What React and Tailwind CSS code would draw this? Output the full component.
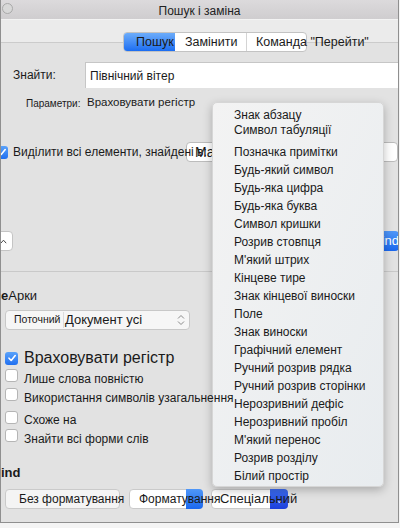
import React from "react";

const menuItems = [
  "Позначка примітки",
  "Будь-який символ",
  "Будь-яка цифра",
  "Будь-яка буква",
  "Символ кришки",
  "Розрив стовпця",
  "М'який штрих",
  "Кінцеве тире",
  "Знак кінцевої виноски",
  "Поле",
  "Знак виноски",
  "Графічний елемент",
  "Ручний розрив рядка",
  "Ручний розрив сторінки",
  "Нерозривний дефіс",
  "Нерозривний пробіл",
  "М'який перенос",
  "Розрив розділу",
  "Білий простір",
];

function Check({ checked }) {
  if (checked) {
    return (
      <div className="w-[13px] h-[13px] rounded-[3px] bg-gradient-to-b from-[#5aa2fa] to-[#1f6ff0] flex items-center justify-center shrink-0">
        <svg width="10" height="10" viewBox="0 0 10 10">
          <path d="M2 5.2 L4.2 7.5 L8.2 2.5" stroke="white" strokeWidth="1.6" fill="none" strokeLinecap="round" strokeLinejoin="round" />
        </svg>
      </div>
    );
  }
  return <div className="w-[13px] h-[13px] rounded-[3px] bg-white border border-[#b5b5b5] shrink-0" />;
}

export default function App() {
  return (
    <div className="w-[400px] h-[528px] bg-[#f4f4f4] overflow-hidden" style={{ fontFamily: '"Liberation Sans", Arial, sans-serif' }}>
      <div className="relative w-[399px] h-[523px] bg-[#e2e2e2] border-l border-r border-b border-[#8f8f8f] overflow-hidden text-[#1a1a1a]">
        {/* title bar */}
        <div className="h-[19px] bg-gradient-to-b from-[#dcdadc] to-[#cfcdcf] flex items-end relative">
          <div className="absolute left-[1px] top-[3px] w-[11px] h-[11px] rounded-full border border-[#a9a9a9] bg-[#d8d8d8]" />
          <div className="w-full text-center text-[12px] leading-[14px] pb-[1px] text-[#222]">Пошук і заміна</div>
        </div>
        {/* toolbar */}
        <div className="h-[24px] bg-[#ebebeb] border-t border-[#f3f3f3] border-b border-b-[#cbcbcb]" />
        {/* tabs */}
        <div className="mt-[-11px] ml-[122px] h-[20px] flex relative z-10">
          <div className="flex h-[20px] rounded-[4px] border border-[#c3c3c3] bg-white text-[12.5px] leading-[18px]">
            <div className="w-[51px] h-full rounded-l-[3px] bg-gradient-to-b from-[#6cacfa] to-[#1b6df1] pl-[12px] overflow-hidden whitespace-nowrap text-[#1a1a1a]">Пошук</div>
            <div className="w-[72px] h-full border-r border-[#d4d4d4] pl-[10px] whitespace-nowrap">Замінити</div>
            <div className="w-[59px] h-full pl-[9px] whitespace-nowrap overflow-visible">Команда "Перейти"</div>
          </div>
        </div>
        {/* find row */}
        <div className="mt-[10px] h-[26px] flex items-center">
          <div className="w-[84px] pl-[12px] text-[12px]">Знайти:</div>
          <div className="flex-1 h-[26px] bg-white border-t border-l border-[#c6c6c6] pl-[4px] flex items-center text-[12px]">Північний вітер</div>
        </div>
        {/* params */}
        <div className="mt-[8px] h-[14px] flex items-center">
          <div className="w-[86px] pl-[25px] text-[10px] whitespace-nowrap">Параметри:</div>
          <div className="text-[11.5px] whitespace-nowrap">Враховувати регістр</div>
        </div>
        {/* highlight row */}
        <div className="mt-[32px] h-[20px] flex items-center">
          <div className="ml-[-6px] mr-[5px]"><Check checked /></div>
          <div className="w-[173px] text-[12px] whitespace-nowrap relative z-10">Виділити всі елементи, знайдені в:</div>
          <div className="flex-1 h-[20px] bg-white border border-[#bcbcbc] rounded-[4px] pl-[8px] text-[14px] leading-[18px]">Ma</div>
        </div>
        {/* buttons row */}
        <div className="mt-[69px] h-[20px] flex items-center justify-between">
          <div className="ml-[-20px] w-[32px] h-[20px] bg-white border border-[#c4c4c4] rounded-[4px] flex items-center justify-end pr-[5px] text-[11px] text-[#555]">
            <svg width="7" height="5" viewBox="0 0 7 5"><path d="M0.8 4.2 L3.5 1.2 L6.2 4.2" stroke="#444" strokeWidth="1" fill="none" /></svg>
          </div>
          <div className="w-[60px] h-[20px] rounded-[4px] bg-gradient-to-b from-[#4f97f8] to-[#1a67ee] text-white text-[13px] leading-[20px] text-right mr-[-1px]">Find</div>
        </div>
        {/* separator */}
        <div className="mt-[20px] h-[1px] bg-[#c9c9c9]" />
        {/* section label */}
        <div className="mt-[16px] h-[16px] flex items-center text-[13px]">
          <span className="font-bold">е</span><span>Арки</span>
        </div>
        {/* select */}
        <div className="mt-[6px] ml-[4px] w-[185px] h-[20px] bg-[#f6f6f6] border border-[#c8c8c8] rounded-[4px] flex items-center">
          <div className="pl-[8px] w-[58px] text-[10.5px] whitespace-nowrap border-r border-[#dcdcdc]">Поточний</div>
          <div className="pl-[1px] flex-1 text-[13px] whitespace-nowrap">Документ усі</div>
          <svg width="8" height="12" viewBox="0 0 8 12" className="mr-[4px]">
            <path d="M1 4.5 L4 1.5 L7 4.5" stroke="#8a8a8a" strokeWidth="1" fill="none" />
            <path d="M1 7.5 L4 10.5 L7 7.5" stroke="#8a8a8a" strokeWidth="1" fill="none" />
          </svg>
        </div>
        {/* options */}
        <div className="mt-[18px] h-[20px] flex items-center pl-[4px]">
          <Check checked />
          <div className="ml-[6px] text-[16px] whitespace-nowrap">Враховувати регістр</div>
        </div>
        <div className="mt-[1px] h-[16px] flex items-start pl-[4px]">
          <Check />
          <div className="ml-[6px] mt-[3px] text-[12px] leading-[14px] whitespace-nowrap">Лише слова повністю</div>
        </div>
        <div className="mt-[3px] h-[16px] flex items-start pl-[4px]">
          <Check />
          <div className="ml-[6px] mt-[3px] text-[12px] leading-[14px] whitespace-nowrap relative z-30">Використання символів узагальнення</div>
        </div>
        <div className="mt-[7px] h-[16px] flex items-start pl-[4px]">
          <Check />
          <div className="ml-[6px] mt-[2px] text-[12px] leading-[14px] whitespace-nowrap">Схоже на</div>
        </div>
        <div className="mt-[2px] h-[16px] flex items-start pl-[4px]">
          <Check />
          <div className="ml-[6px] mt-[3px] text-[12px] leading-[14px] whitespace-nowrap">Знайти всі форми слів</div>
        </div>
        <div className="mt-[20px] h-[16px] flex items-center text-[13px] font-bold">ind</div>
        {/* bottom buttons */}
        <div className="mt-[8px] h-[20px] flex items-center pl-[4px] text-[12px]">
          <div className="w-[115px] h-[20px] bg-[#f4f4f4] border border-[#cacaca] rounded-[4px] pl-[13px] leading-[18px] whitespace-nowrap">Без форматування</div>
          <div className="ml-[9px] w-[74px] h-[20px] bg-white border border-[#cacaca] rounded-[4px] flex overflow-visible relative">
            <div className="pl-[9px] leading-[18px] whitespace-nowrap relative z-10">Форматування</div>
            <div className="absolute right-[-1px] top-[-1px] w-[17px] h-[20px] rounded-r-[4px] bg-gradient-to-b from-[#4f97f8] to-[#1a67ee]" />
          </div>
          <div className="ml-[8px] w-[77px] h-[20px] bg-white border border-[#cacaca] rounded-[4px] relative">
            <div className="absolute right-[-1px] top-[-1px] w-[18px] h-[20px] rounded-r-[4px] bg-gradient-to-b from-[#3d6cf0] to-[#1d3fdc] flex items-center justify-center">
              <span className="text-[10px] text-white/80">⌄</span>
            </div>
            <div className="pl-[8px] leading-[18px] text-[13px] whitespace-nowrap relative z-10">Спеціальний</div>
          </div>
        </div>

        {/* dropdown menu */}
        <div className="absolute left-[211px] top-[102px] w-[172px] h-[385px] rounded-[5px] bg-gradient-to-br from-[#f3f3f3] to-[#e8ecef] border border-[#d6d6d6] shadow-[0_3px_10px_rgba(0,0,0,0.25)] z-20 pt-[5px] text-[12px] text-[#1a1a1a]">
          <div className="h-[15px] leading-[15px] pl-[21px] whitespace-nowrap">Знак абзацу</div>
          <div className="h-[15px] leading-[15px] pl-[21px] whitespace-nowrap">Символ табуляції</div>
          <div className="h-[5px]" />
          {menuItems.map((t) => (
            <div key={t} className="h-[18px] leading-[18px] pl-[21px] whitespace-nowrap">{t}</div>
          ))}
        </div>
      </div>
    </div>
  );
}
